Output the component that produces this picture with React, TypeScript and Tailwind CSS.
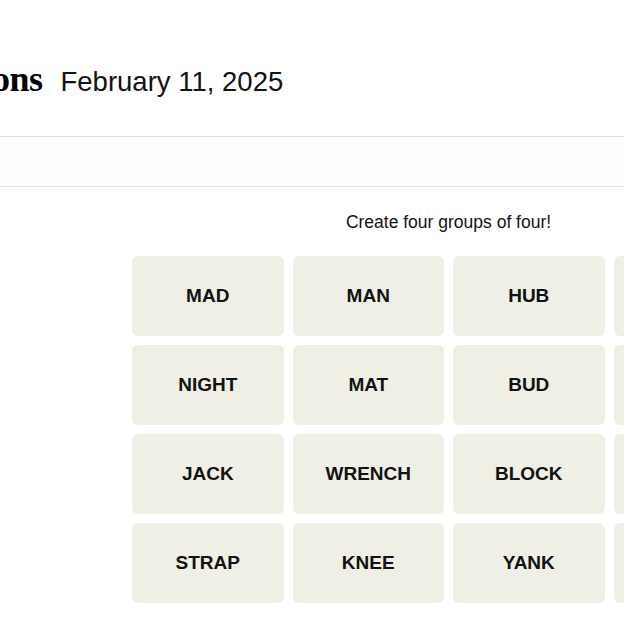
import React from 'react';

const words = [
  'MAD', 'MAN', 'HUB', 'HOLE',
  'NIGHT', 'MAT', 'BUD', 'CAP',
  'JACK', 'WRENCH', 'BLOCK', 'TUG',
  'STRAP', 'KNEE', 'YANK', 'LEAN',
];

const Tile: React.FC<{ word: string }> = ({ word }) => (
  <button className="h-[80px] w-full rounded-[6px] bg-[#efefe6] text-[19px] font-bold uppercase text-[#121212] font-['Liberation_Sans',Arial,sans-serif]">
    {word}
  </button>
);

const App: React.FC = () => {
  return (
    <div className="h-screen w-screen overflow-hidden bg-white text-[#121212] font-['Liberation_Sans',Arial,sans-serif]">
      {/* header */}
      <header className="flex h-[137px] items-center border-b border-[#dedede]">
        <div className="flex items-baseline gap-[18px] pt-[22px]">
          <h1 className="-ml-[142px] text-[36px] font-black tracking-[-0.5px] text-black font-['Liberation_Serif',Times,serif]">
            Connections
          </h1>
          <span className="text-[27.5px] font-normal text-[#121212]">February 11, 2025</span>
        </div>
      </header>

      {/* toolbar strip */}
      <div className="h-[50px] border-b border-[#dedede] bg-[#fdfdfd]" />

      {/* board */}
      <main className="ml-[132px] w-[633px]">
        <p className="pt-[22px] text-center text-[17.5px] text-[#121212]">Create four groups of four!</p>
        <div className="mt-[21px] grid grid-cols-4 gap-x-[9px] gap-y-[9px]">
          {words.map((w) => (
            <Tile key={w} word={w} />
          ))}
        </div>
      </main>
    </div>
  );
};

export default App;
